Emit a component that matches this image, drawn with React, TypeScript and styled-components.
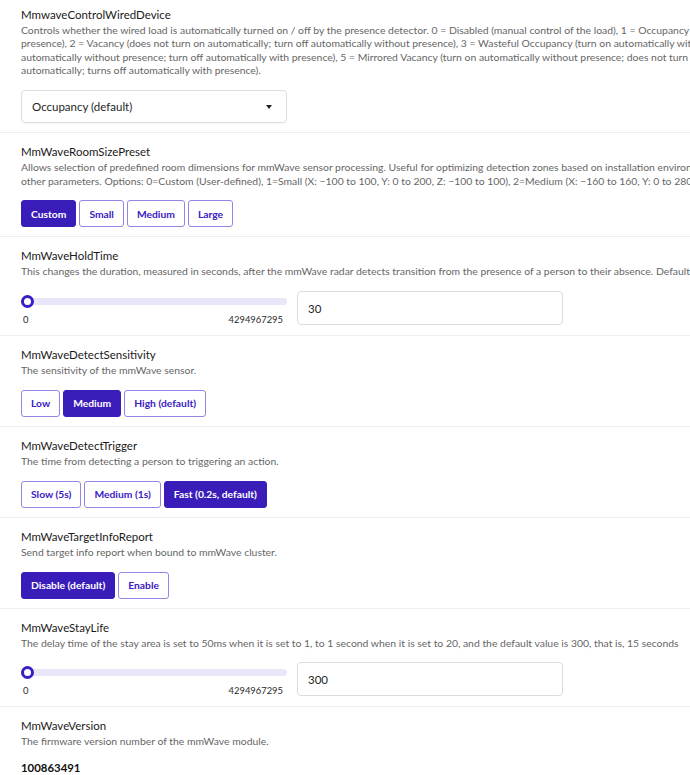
import React from "react";
import styled, { createGlobalStyle } from "styled-components";

const GlobalStyle = createGlobalStyle`
  html, body {
    margin: 0;
    padding: 0;
    background: #ffffff;
    overflow: hidden;
  }
  body {
    font-family: Lato, "Open Sans", "Liberation Sans", sans-serif;
    color: #1b1b1b;
  }
`;

const Page = styled.div`
  width: 1200px;
`;

const Section = styled.section<{ $first?: boolean }>`
  padding: ${(p) => (p.$first ? "6px" : "10px")} 0 9px 21px;
  border-bottom: 1px solid #eeeeee;
`;

const Title = styled.div`
  font-size: 11.5px;
  line-height: 18px;
  color: #1a1a1a;
`;

const Description = styled.div`
  font-size: 10.4px;
  line-height: 13.4px;
  color: #666666;
  white-space: nowrap;
`;

const Controls = styled.div`
  margin-top: 12.5px;
`;

const SelectBox = styled.div`
  width: 266px;
  height: 33px;
  box-sizing: border-box;
  border: 1px solid #dedede;
  border-radius: 4px;
  display: flex;
  align-items: center;
  justify-content: space-between;
  padding: 0 14px 0 10px;
  font-size: 11.5px;
  color: #1e1e1e;
  box-shadow: 0 1px 1px rgba(0, 0, 0, 0.04);
`;

const Caret = styled.span`
  width: 0;
  height: 0;
  border-left: 3.5px solid transparent;
  border-right: 3.5px solid transparent;
  border-top: 4px solid #222;
`;

const ButtonGroup = styled.div`
  display: flex;
  gap: 3px;
`;

const OptionButton = styled.button<{ $active?: boolean }>`
  height: 27px;
  box-sizing: border-box;
  padding: 0 9px;
  border-radius: 3px;
  border: 1px solid ${(p) => (p.$active ? "#3a1db9" : "#9486e6")};
  background: ${(p) => (p.$active ? "#3a1db9" : "#ffffff")};
  color: ${(p) => (p.$active ? "#ffffff" : "#3a20c4")};
  font-family: inherit;
  font-size: 10.3px;
  font-weight: 700;
  cursor: pointer;
`;

const SliderRow = styled.div`
  display: flex;
  align-items: flex-start;
  gap: 10px;
`;

const SliderColumn = styled.div`
  width: 266px;
  padding-top: 3.5px;
`;

const Track = styled.div`
  position: relative;
  height: 7px;
  margin: 3px 0;
  border-radius: 4px;
  background: #e9e6f9;
`;

const Thumb = styled.span`
  position: absolute;
  left: 0;
  top: 50%;
  width: 13px;
  height: 13px;
  box-sizing: border-box;
  margin-top: -6.5px;
  border-radius: 50%;
  border: 3px solid #3a1dc4;
  background: #ffffff;
`;

const Bounds = styled.div`
  display: flex;
  justify-content: space-between;
  padding: 6px 4px 0 2px;
  font-size: 9.4px;
  line-height: 12px;
  color: #2a2a2a;
`;

const NumberInput = styled.div`
  width: 266px;
  height: 34px;
  box-sizing: border-box;
  border: 1px solid #dcdcdc;
  border-radius: 4px;
  display: flex;
  align-items: center;
  padding: 0 10px;
  font-size: 11.5px;
  color: #1e1e1e;
`;

const Value = styled.div`
  margin-top: 13px;
  font-size: 11.4px;
  font-weight: 700;
  color: #111;
`;

type Choice = { label: string; active?: boolean };

const Choices = ({ items }: { items: Choice[] }) => (
  <Controls>
    <ButtonGroup>
      {items.map((c) => (
        <OptionButton key={c.label} $active={c.active}>
          {c.label}
        </OptionButton>
      ))}
    </ButtonGroup>
  </Controls>
);

const Slider = ({ value }: { value: string }) => (
  <Controls>
    <SliderRow>
      <SliderColumn>
        <Track>
          <Thumb />
        </Track>
        <Bounds>
          <span>0</span>
          <span>4294967295</span>
        </Bounds>
      </SliderColumn>
      <NumberInput>{value}</NumberInput>
    </SliderRow>
  </Controls>
);

export default function App() {
  return (
    <Page>
      <GlobalStyle />
      <Section $first>
        <Title>MmwaveControlWiredDevice</Title>
        <Description>
          Controls whether the wired load is automatically turned on / off by the presence detector. 0 = Disabled (manual control of the load), 1 = Occupancy (turn on automatically with
          <br />
          presence), 2 = Vacancy (does not turn on automatically; turn off automatically without presence), 3 = Wasteful Occupancy (turn on automatically with presence; does not turn off
          <br />
          automatically without presence; turn off automatically with presence), 5 = Mirrored Vacancy (turn on automatically without presence; does not turn on
          <br />
          automatically; turns off automatically with presence).
        </Description>
        <Controls>
          <SelectBox>
            <span>Occupancy (default)</span>
            <Caret />
          </SelectBox>
        </Controls>
      </Section>

      <Section>
        <Title>MmWaveRoomSizePreset</Title>
        <Description>
          Allows selection of predefined room dimensions for mmWave sensor processing. Useful for optimizing detection zones based on installation environment. Custom uses the
          <br />
          other parameters. Options: 0=Custom (User-defined), 1=Small (X: −100 to 100, Y: 0 to 200, Z: −100 to 100), 2=Medium (X: −160 to 160, Y: 0 to 280, Z: −100 to 100)
        </Description>
        <Choices
          items={[
            { label: "Custom", active: true },
            { label: "Small" },
            { label: "Medium" },
            { label: "Large" },
          ]}
        />
      </Section>

      <Section>
        <Title>MmWaveHoldTime</Title>
        <Description>
          This changes the duration, measured in seconds, after the mmWave radar detects transition from the presence of a person to their absence. Default = 30
        </Description>
        <Slider value="30" />
      </Section>

      <Section>
        <Title>MmWaveDetectSensitivity</Title>
        <Description>The sensitivity of the mmWave sensor.</Description>
        <Choices
          items={[
            { label: "Low" },
            { label: "Medium", active: true },
            { label: "High (default)" },
          ]}
        />
      </Section>

      <Section>
        <Title>MmWaveDetectTrigger</Title>
        <Description>The time from detecting a person to triggering an action.</Description>
        <Choices
          items={[
            { label: "Slow (5s)" },
            { label: "Medium (1s)" },
            { label: "Fast (0.2s, default)", active: true },
          ]}
        />
      </Section>

      <Section>
        <Title>MmWaveTargetInfoReport</Title>
        <Description>Send target info report when bound to mmWave cluster.</Description>
        <Choices
          items={[{ label: "Disable (default)", active: true }, { label: "Enable" }]}
        />
      </Section>

      <Section>
        <Title>MmWaveStayLife</Title>
        <Description>
          The delay time of the stay area is set to 50ms when it is set to 1, to 1 second when it is set to 20, and the default value is 300, that is, 15 seconds
        </Description>
        <Slider value="300" />
      </Section>

      <Section>
        <Title>MmWaveVersion</Title>
        <Description>The firmware version number of the mmWave module.</Description>
        <Value>100863491</Value>
      </Section>
    </Page>
  );
}
